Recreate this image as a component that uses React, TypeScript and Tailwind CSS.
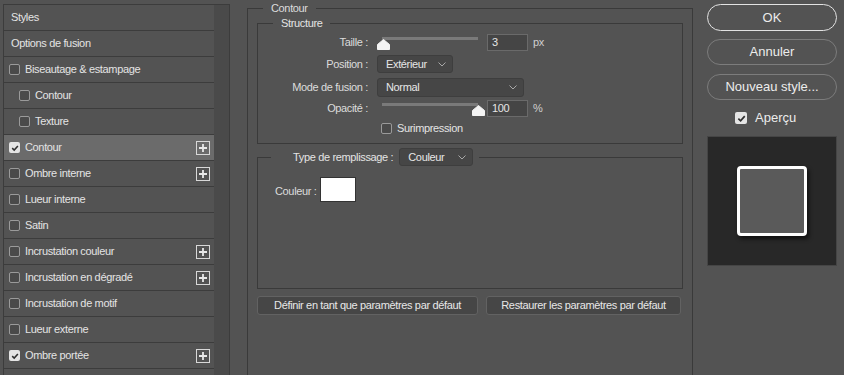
import React from 'react';

type Item = {
  label: string;
  plain?: boolean;
  indent?: boolean;
  checked?: boolean;
  plus?: boolean;
  selected?: boolean;
};

const items: Item[] = [
  { label: 'Styles', plain: true },
  { label: 'Options de fusion', plain: true },
  { label: 'Biseautage & estampage' },
  { label: 'Contour', indent: true },
  { label: 'Texture', indent: true },
  { label: 'Contour', checked: true, plus: true, selected: true },
  { label: 'Ombre interne', plus: true },
  { label: 'Lueur interne' },
  { label: 'Satin' },
  { label: 'Incrustation couleur', plus: true },
  { label: 'Incrustation en dégradé', plus: true },
  { label: 'Incrustation de motif' },
  { label: 'Lueur externe' },
  { label: 'Ombre portée', checked: true, plus: true },
  { label: '' },
];

const Check = ({ checked, size = 11 }: { checked?: boolean; size?: number }) =>
  checked ? (
    <span
      className="flex items-center justify-center rounded-[2px] bg-[#e4e4e4] shrink-0"
      style={{ width: size, height: size }}
    >
      <svg width={size - 3} height={size - 3} viewBox="0 0 10 10">
        <path d="M1.5 5.2 L4 7.6 L8.6 2.4" fill="none" stroke="#2e2e2e" strokeWidth="1.9" />
      </svg>
    </span>
  ) : (
    <span
      className="rounded-[2px] border border-[#9a9a9a] bg-[#4a4a4a] shrink-0"
      style={{ width: size, height: size }}
    />
  );

const Plus = () => (
  <span className="w-[14px] h-[14px] border border-[#d8d8d8] flex items-center justify-center">
    <svg width="10" height="10" viewBox="0 0 10 10">
      <path d="M5 1 V9 M1 5 H9" stroke="#e8e8e8" strokeWidth="1.8" />
    </svg>
  </span>
);

const Chevron = () => (
  <svg width="8" height="5" viewBox="0 0 8 5">
    <path d="M0.5 0.5 L4 4 L7.5 0.5" fill="none" stroke="#a8a8a8" strokeWidth="1" />
  </svg>
);

const Thumb = () => (
  <svg width="13" height="11" viewBox="0 0 13 11">
    <path d="M6.5 0.5 L12.5 5.5 L12.5 10.5 L0.5 10.5 L0.5 5.5 Z" fill="#f4f4f4" stroke="#f4f4f4" strokeLinejoin="round" />
  </svg>
);

const Slider = ({ value }: { value: number }) => (
  <div className="relative w-[106px] h-full">
    <div className="absolute left-[5px] right-[5px] top-[3px] h-[3px] bg-[#7a7a7a]" />
    <div className="absolute top-[5px]" style={{ left: value * 95 }}>
      <Thumb />
    </div>
  </div>
);

const Select = ({ value, width, height }: { value: string; width: number; height: number }) => (
  <div
    className="flex items-center justify-between rounded-[3px] border border-[#3e3e3e] bg-[#464646] pl-[8px] pr-[6px] text-[#e6e6e6]"
    style={{ width, height }}
  >
    <span>{value}</span>
    <Chevron />
  </div>
);

const NumInput = ({ value }: { value: string }) => (
  <div className="w-[41px] h-[17px] border border-[#6a6a6a] bg-[#454545] pl-[4px] leading-[15px] text-[#e6e6e6]">
    {value}
  </div>
);

export default function App() {
  return (
    <div
      className="w-[844px] h-[375px] overflow-hidden bg-[#535353] flex text-[11px] tracking-[-0.35px] text-[#dcdcdc]"
      style={{ fontFamily: '"Liberation Sans", Arial, sans-serif' }}
    >
      {/* left list */}
      <div className="ml-[3px] mt-[4px] w-[227px] flex border-t border-l border-r border-[#3c3c3c] shrink-0">
        <div className="w-[210px] shrink-0">
          {items.map((it, i) => (
            <div
              key={i}
              className={`h-[26px] border-b border-[#3c3c3c] flex items-center pr-[4px] ${
                it.selected ? 'bg-[#6b6b6b]' : ''
              } ${it.plain ? 'pl-[7px]' : it.indent ? 'pl-[15px]' : 'pl-[5px]'}`}
            >
              {!it.plain && it.label && <Check checked={it.checked} />}
              <span className={`${it.plain ? '' : 'ml-[5px]'} text-[#e4e4e4] flex-1`}>{it.label}</span>
              {it.plus && <Plus />}
            </div>
          ))}
        </div>
        <div className="flex-1 bg-[#4a4a4a]" />
      </div>

      {/* center */}
      <div className="ml-[17px] w-[446px] shrink-0">
        <fieldset className="border border-[#3a3a3a] h-[400px] px-[9px]">
          <legend className="ml-[6px] px-[8px] leading-[16px] text-[#dcdcdc]">Contour</legend>

          <fieldset className="border border-[#3a3a3a] -mt-[1px] pb-[8px]">
            <legend className="ml-[15px] px-[8px] leading-[16px] text-[#e4e4e4]">Structure</legend>
            <div className="flex flex-col">
              <div className="flex items-center h-[17px] mt-[3px]">
                <span className="w-[111px] text-right pr-[1px]">Taille :</span>
                <div className="ml-[8px] h-full">
                  <Slider value={0} />
                </div>
                <div className="ml-[4px]">
                  <NumInput value="3" />
                </div>
                <span className="ml-[5px] text-[#cfcfcf]">px</span>
              </div>
              <div className="flex items-center h-[18px] mt-[4px]">
                <span className="w-[111px] text-right pr-[1px]">Position :</span>
                <div className="ml-[8px]">
                  <Select value="Extérieur" width={76} height={18} />
                </div>
              </div>
              <div className="flex items-center h-[19px] mt-[5px]">
                <span className="w-[111px] text-right pr-[1px]">Mode de fusion :</span>
                <div className="ml-[8px]">
                  <Select value="Normal" width={147} height={19} />
                </div>
              </div>
              <div className="flex items-center h-[17px] mt-[3px]">
                <span className="w-[111px] text-right pr-[1px]">Opacité :</span>
                <div className="ml-[8px] h-full">
                  <Slider value={1} />
                </div>
                <div className="ml-[4px]">
                  <NumInput value="100" />
                </div>
                <span className="ml-[5px] text-[#cfcfcf]">%</span>
              </div>
              <div className="flex items-center h-[14px] mt-[4px] pl-[123px]">
                <Check />
                <span className="ml-[5px] text-[#e4e4e4]">Surimpression</span>
              </div>
            </div>
          </fieldset>

          <fieldset className="border border-[#3a3a3a] mt-[4px]">
            <legend className="ml-[13px] pl-[22px] pr-[6px] flex items-center h-[18px]">
              <span className="text-[#e4e4e4]">Type de remplissage :</span>
              <div className="ml-[6px]">
                <Select value="Couleur" width={74} height={18} />
              </div>
            </legend>
            <div className="h-[122px] pt-[11px] pl-[17px] flex items-start">
              <span className="mt-[6px]">Couleur :</span>
              <div className="ml-[4px] w-[36px] h-[25px] bg-white border border-[#333]" />
            </div>
          </fieldset>

          <div className="flex mt-[7px] gap-[8px] text-[#e8e8e8]">
            <div className="w-[221px] h-[19px] rounded-[3px] border border-[#626262] bg-[#464646] flex items-center justify-center">
              Définir en tant que paramètres par défaut
            </div>
            <div className="w-[195px] h-[19px] rounded-[3px] border border-[#626262] bg-[#464646] flex items-center justify-center">
              Restaurer les paramètres par défaut
            </div>
          </div>
        </fieldset>
      </div>

      {/* right */}
      <div className="ml-[14px] w-[130px] shrink-0 pt-[4px] flex flex-col text-[13px] tracking-normal text-[#ececec]">
        <div className="h-[27px] rounded-full border-[1.5px] border-[#e2e2e2] flex items-center justify-center">OK</div>
        <div className="h-[26px] mt-[8px] rounded-full border border-[#7c7c7c] flex items-center justify-center">
          Annuler
        </div>
        <div className="h-[26px] mt-[9px] rounded-full border border-[#7c7c7c] flex items-center justify-center">
          Nouveau style...
        </div>
        <div className="flex items-center mt-[12px] ml-[28px] h-[12px]">
          <Check checked size={12} />
          <span className="ml-[8px]">Aperçu</span>
        </div>
        <div className="mt-[12px] w-[130px] h-[130px] bg-[#282828] border border-[#454545] flex items-center justify-center">
          <div className="w-[70px] h-[70px] rounded-[4px] border-[3px] border-white bg-[#5a5a5a] shadow-[2px_3px_4px_rgba(0,0,0,0.6)]" />
        </div>
      </div>
    </div>
  );
}
